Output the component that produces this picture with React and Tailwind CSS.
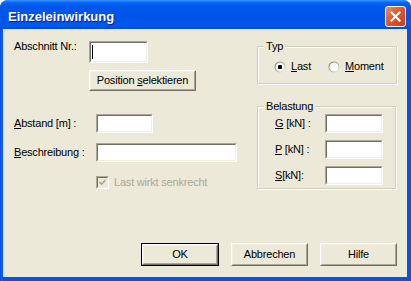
import React from 'react';

const bodyFont = { fontFamily: '"Liberation Sans", Arial, sans-serif' };

function Field({ className = '', cursor = false }) {
  return (
    <div className={`flex border border-t-[#ACA899] border-l-[#ACA899] border-r-white border-b-white ${className}`}>
      <div className="flex-1 border border-t-[#716F64] border-l-[#716F64] border-r-[#F1EFE2] border-b-[#F1EFE2] bg-white">
        {cursor && <div className="ml-[1px] mt-[2px] h-[14px] w-[1px] bg-black" />}
      </div>
    </div>
  );
}

function Button({ className = '', isDefault = false, children }) {
  const face = (
    <div className="flex h-full w-full border border-t-white border-l-white border-r-[#716F64] border-b-[#716F64]">
      <div className="flex flex-1 items-center justify-center border border-t-[#F1EFE2] border-l-[#F1EFE2] border-r-[#ACA899] border-b-[#ACA899] bg-[#ECE9D8] text-[11px] leading-[13px] text-black">
        {children}
      </div>
    </div>
  );
  if (isDefault) {
    return <div className={`border border-black ${className}`}>{face}</div>;
  }
  return <div className={className}>{face}</div>;
}

function Radio({ checked }) {
  return (
    <svg width="12" height="12" viewBox="0 0 12 12">
      <defs>
        <linearGradient id="rg" x1="0" y1="0" x2="1" y2="1">
          <stop offset="0%" stopColor="#716F64" />
          <stop offset="55%" stopColor="#ACA899" />
          <stop offset="100%" stopColor="#ffffff" />
        </linearGradient>
      </defs>
      <circle cx="6" cy="6" r="5.5" fill="url(#rg)" />
      <circle cx="6" cy="6" r="4.5" fill="#ffffff" />
      {checked && <rect x="4" y="4" width="4" height="4" rx="1" fill="#000000" />}
    </svg>
  );
}

function GroupBox({ title, className = '', children }) {
  return (
    <div className={`relative border border-[#D0D0BF] shadow-[inset_1px_1px_0_#ffffff,1px_1px_0_#ffffff] ${className}`}>
      <span className="absolute -top-[7px] left-[6px] bg-[#ECE9D8] px-[2px] text-[11px] leading-[13px] text-black">
        {title}
      </span>
      {children}
    </div>
  );
}

export default function App() {
  return (
    <div className="flex h-[281px] w-[411px] flex-col overflow-hidden rounded-t-[8px] bg-[#0055EA]" style={bodyFont}>
      {/* title bar */}
      <div className="flex h-[29px] items-center justify-between bg-[linear-gradient(to_bottom,#3D95FF_0%,#0A6AF8_8%,#0058EE_20%,#0053E8_60%,#0058EE_88%,#0048D8_100%)] pl-[8px] pr-[5px] pt-[3px]">
        <span className="text-[13px] font-bold leading-[15px] text-white [text-shadow:1px_1px_0_#0A1E8C]">
          Einzeleinwirkung
        </span>
        <div className="flex h-[21px] w-[21px] items-center justify-center rounded-[3px] border border-white bg-[linear-gradient(135deg,#EE8A66_0%,#E2572F_45%,#C83C18_100%)]">
          <svg width="11" height="11" viewBox="0 0 11 11">
            <path d="M1.5 1.5 L9.5 9.5 M9.5 1.5 L1.5 9.5" stroke="#ffffff" strokeWidth="2.2" strokeLinecap="square" />
          </svg>
        </div>
      </div>

      {/* frame + client area */}
      <div className="flex flex-1 bg-[linear-gradient(to_right,#0831D9_0px,#166AEE_1px,#0055EA_3px)] pb-[4px] pl-[3px] pr-[4px]">
        <div className="flex flex-1 flex-col bg-[#ECE9D8] text-[11px] leading-[13px] tracking-[-0.2px] text-black">
          <div className="flex h-[214px]">
            {/* left column */}
            <div className="flex w-[254px] flex-col pl-[11px] pt-[11px]">
              <div className="flex items-start">
                <span className="w-[75px]">Abschnitt Nr.:</span>
                <Field className="mt-[1px] h-[22px] w-[59px]" cursor />
              </div>
              <Button className="ml-[75px] mt-[7px] h-[21px] w-[107px]">
                <span>
                  Position <u>s</u>elektieren
                </span>
              </Button>
              <div className="mt-[23px] flex items-center">
                <span className="w-[82px]">
                  <u>A</u>bstand [m] :
                </span>
                <Field className="h-[19px] w-[57px]" />
              </div>
              <div className="mt-[10px] flex items-center">
                <span className="w-[82px]">
                  <u>B</u>eschreibung :
                </span>
                <Field className="h-[19px] w-[141px]" />
              </div>
              <div className="ml-[82px] mt-[14px] flex items-center">
                <div className="flex h-[13px] w-[13px] border border-t-[#ACA899] border-l-[#ACA899] border-r-white border-b-white">
                  <div className="flex flex-1 items-center justify-center border border-t-[#716F64] border-l-[#716F64] border-r-[#F1EFE2] border-b-[#F1EFE2] bg-[#ECE9D8]">
                    <svg width="7" height="7" viewBox="0 0 7 7">
                      <path d="M0.5 3 L2.5 5 L6.5 1" stroke="#ACA899" strokeWidth="1.6" fill="none" />
                    </svg>
                  </div>
                </div>
                <span className="ml-[5px] text-[#ACA899]">Last wirkt senkrecht</span>
              </div>
            </div>

            {/* right column */}
            <div className="flex flex-col pt-[17px]">
              <GroupBox title="Typ" className="h-[38px] w-[140px]">
                <div className="flex items-center pl-[16px] pt-[13px]">
                  <Radio checked />
                  <span className="ml-[5px] w-[37px]">
                    <u>L</u>ast
                  </span>
                  <Radio />
                  <span className="ml-[5px]">
                    <u>M</u>oment
                  </span>
                </div>
              </GroupBox>
              <GroupBox title="Belastung" className="mt-[22px] h-[83px] w-[139px]">
                <div className="flex flex-col gap-[7px] pl-[17px] pt-[7px]">
                  <div className="flex items-center">
                    <span className="w-[50px]">
                      <u>G</u> [kN] :
                    </span>
                    <Field className="h-[19px] w-[58px]" />
                  </div>
                  <div className="flex items-center">
                    <span className="w-[50px]">
                      <u>P</u> [kN] :
                    </span>
                    <Field className="h-[19px] w-[58px]" />
                  </div>
                  <div className="flex items-center">
                    <span className="w-[50px]">
                      <u>S</u>[kN]:
                    </span>
                    <Field className="h-[19px] w-[58px]" />
                  </div>
                </div>
              </GroupBox>
            </div>
          </div>

          {/* dialog buttons */}
          <div className="flex justify-end gap-[12px] pr-[10px]">
            <Button isDefault className="h-[23px] w-[78px]">
              OK
            </Button>
            <Button className="h-[23px] w-[77px]">Abbrechen</Button>
            <Button className="h-[23px] w-[77px]">Hilfe</Button>
          </div>
        </div>
      </div>
    </div>
  );
}
